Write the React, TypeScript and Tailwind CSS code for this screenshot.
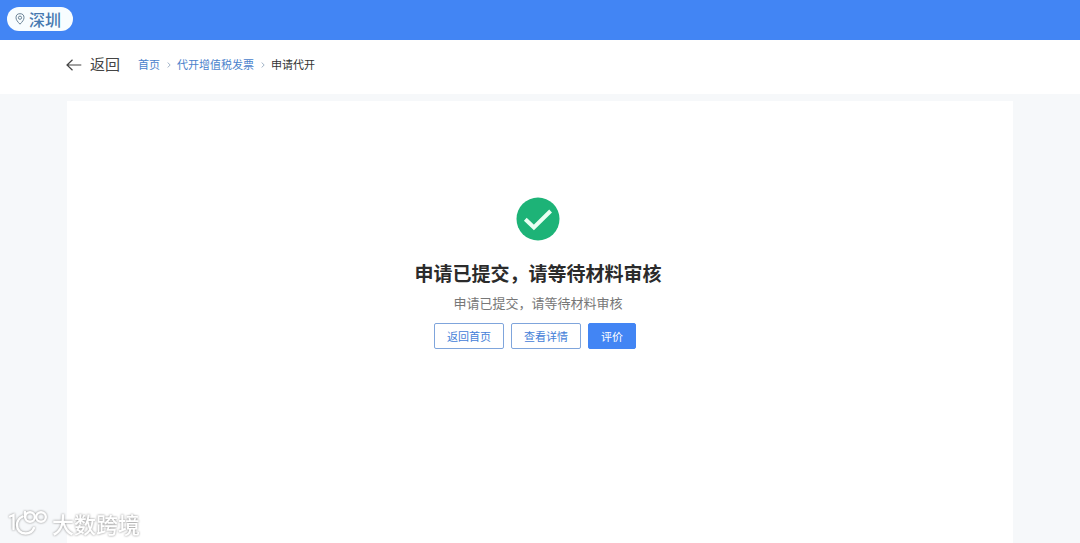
import type { ReactNode } from 'react';

const crumbs = [
	{ label: '首页', href: '#home' },
	{ label: '代开增值税发票', href: '#invoice' },
	{ label: '申请代开' },
];

function PinIcon() {
	return (
		<svg width="10" height="12" viewBox="0 0 10 12" fill="none" stroke="#6b8396" strokeWidth="1" aria-hidden="true">
			<path d="M5 11.2C2.6 8.7 1 6.8 1 4.7a4 4 0 0 1 8 0c0 2.1-1.6 4-4 6.5Z" />
			<circle cx="5" cy="4.7" r="1.6" />
		</svg>
	);
}

function BackArrow() {
	return (
		<svg width="16" height="12" viewBox="0 0 16 12" fill="none" stroke="#444" strokeWidth="1.2" aria-hidden="true">
			<path d="M6.5 0.8 1 6l5.5 5.2M1 6h14.3" />
		</svg>
	);
}

function Separator() {
	return (
		<svg width="4" height="6" viewBox="0 0 4 6" fill="none" stroke="#a3b4c8" strokeWidth="1" aria-hidden="true">
			<path d="M0.6 0.5 3.2 3 0.6 5.5" />
		</svg>
	);
}

function SuccessIcon() {
	return (
		<svg width="44" height="44" viewBox="0 0 44 44" fill="none" aria-hidden="true">
			<circle cx="22" cy="22" r="21.5" fill="#1db377" />
			<path d="m9.3 22.2 8.6 8.2L34.6 14" stroke="#e9fff3" strokeWidth="4" />
		</svg>
	);
}

function Watermark() {
	return (
		<div className="fixed bottom-1 left-2 flex items-center gap-1 text-white drop-shadow-[0_0_1px_#888]">
			<svg width="40" height="28" viewBox="0 0 40 28" fill="none" stroke="currentColor" strokeWidth="2.4" strokeLinecap="round" aria-hidden="true">
				<path d="M2 7.5 5.5 6v14" />
				<path d="M14.5 7.500C10.500 9.500 9 12.500 9 16c0 5 3.500 8.500 8.500 8.500 4 0 7-2 8.500-5.500" />
				<path d="M17 3v5" />
				<circle cx="22" cy="8" r="4.8" />
				<circle cx="33" cy="8" r="4.8" />
			</svg>
			<span className="text-[22px] leading-8 font-medium">大数跨境</span>
		</div>
	);
}

function OutlineButton({ children }: { children: ReactNode }) {
	return (
		<button type="button" className="rounded-xs border border-[#7fa5dc] bg-white px-3 py-1 text-[11px] leading-4 text-[#4380d8]">
			{children}
		</button>
	);
}

export default function App() {
	return (
		<div className="flex min-h-screen flex-col bg-[#f6f8fa] font-['Noto_Sans_CJK_SC',sans-serif]">
			<header className="flex h-10 items-start bg-[#4285f4] px-[7px] pt-[7px]">
				<button type="button" className="flex h-6 items-center gap-1 rounded-full bg-[#f8fdff] pr-3 pl-2 text-base font-medium text-[#4679b0]">
					<PinIcon />
					深圳
				</button>
			</header>

			<nav className="flex h-[54px] items-center bg-white px-[66px] pb-[5px]">
				<a href="#back" className="flex items-center gap-2 text-[15px] text-[#444]">
					<BackArrow />
					返回
				</a>
				<ol className="ml-[18px] flex items-center gap-[7px] text-[11px]">
					{crumbs.map((crumb, i) => (
						<li key={crumb.label} className="flex items-center gap-1.5">
							{i > 0 && <Separator />}
							{crumb.href ? (
								<a href={crumb.href} className="text-[#4a82cc]">{crumb.label}</a>
							) : (
								<span className="text-[#333]">{crumb.label}</span>
							)}
						</li>
					))}
				</ol>
			</nav>

			<main className="mx-[67px] mt-[7px] flex flex-1 flex-col items-center bg-white pt-24 pr-1">
				<SuccessIcon />
				<h1 className="mt-4 text-[19px] leading-8 font-bold text-[#2b2b2b]">申请已提交，请等待材料审核</h1>
				<p className="mt-0.5 text-[13px] leading-6 text-[#777]">申请已提交，请等待材料审核</p>
				<div className="mt-2 mr-1.5 flex gap-[7px]">
					<OutlineButton>返回首页</OutlineButton>
					<OutlineButton>查看详情</OutlineButton>
					<button type="button" className="rounded-xs border border-[#4285f4] bg-[#4285f4] px-3 py-1 text-[11px] leading-4 text-white">
						评价
					</button>
				</div>
			</main>

			<Watermark />
		</div>
	);
}
